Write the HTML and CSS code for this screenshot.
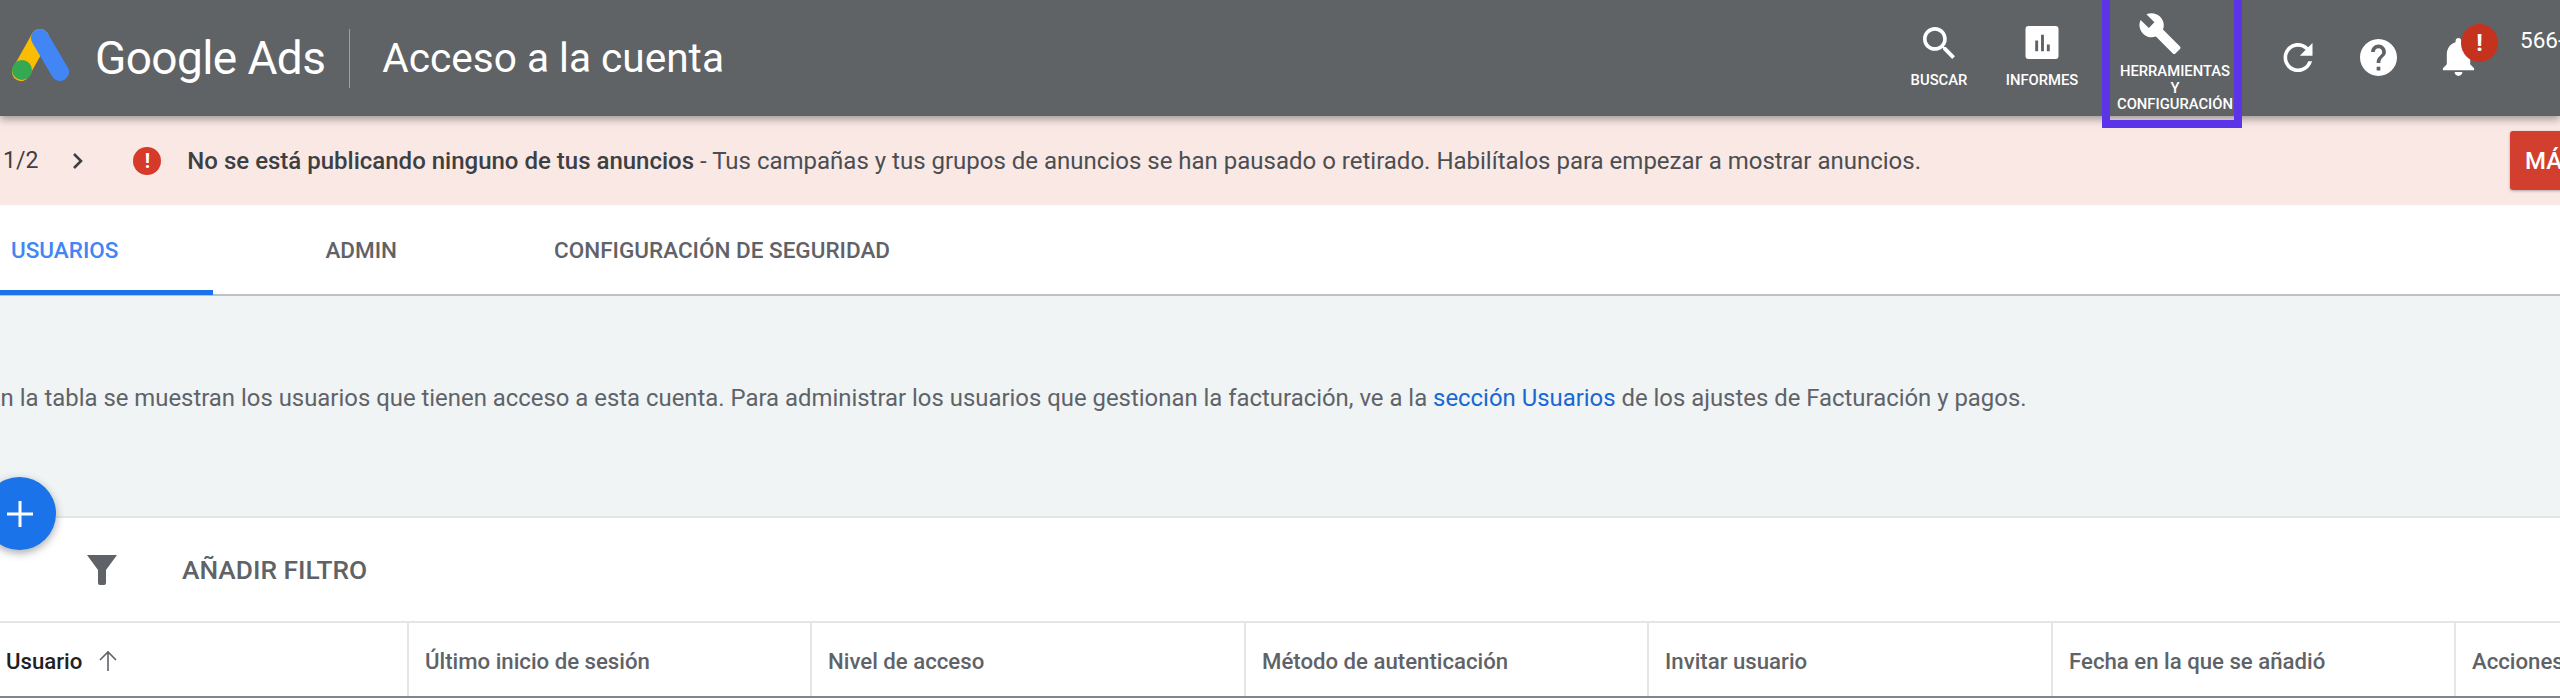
FILE: index.html
```html
<!DOCTYPE html>
<html lang="es">
<head>
<meta charset="utf-8">
<title>Acceso a la cuenta</title>
<link rel="stylesheet" href="styles.css">
</head>
<body>
<div class="page">
  <header class="topbar">
    <svg class="ads-logo" viewBox="0 0 58 52" width="58" height="52">
      <path d="M28 9 9 43" class="stripe-yellow"/>
      <path d="M28 9 48 43" class="stripe-blue"/>
      <circle cx="10" cy="41" r="10" class="dot-green"/>
    </svg>
    <span class="brand">Google Ads</span>
    <span class="divider"></span>
    <h1 class="page-title">Acceso a la cuenta</h1>
    <nav class="tools">
      <div class="tool tool-search">
        <svg class="icon icon-search" viewBox="3 3 17.5 17.5"><path d="M15.5 14h-.79l-.28-.27C15.41 12.59 16 11.11 16 9.5 16 5.91 13.09 3 9.5 3S3 5.91 3 9.5 5.91 16 9.5 16c1.61 0 3.09-.59 4.23-1.57l.27.28v.79l5 4.99L20.49 19l-4.99-5zm-6 0C7.01 14 5 11.99 5 9.5S7.01 5 9.5 5 14 7.01 14 9.5 11.99 14 9.5 14z"/></svg>
        <span class="tool-label">BUSCAR</span>
      </div>
      <div class="tool tool-reports">
        <svg class="icon icon-reports" viewBox="0 0 34 34"><path fill-rule="evenodd" d="M3 0h28a3 3 0 0 1 3 3v28a3 3 0 0 1-3 3H3a3 3 0 0 1-3-3V3a3 3 0 0 1 3-3zM10 15v11h3V15zM16 9v17h3V9zM22 19v7h3v-7z"/></svg>
        <span class="tool-label">INFORMES</span>
      </div>
      <div class="tool tool-config">
        <svg class="icon icon-wrench" viewBox="1 1 22 22"><path d="M22.7 19l-9.1-9.1c.9-2.3.4-5-1.5-6.9-2-2-5-2.4-7.4-1.3L9 6 6 9 1.6 4.7C.4 7.1.9 10.1 2.9 12.1c1.9 1.9 4.6 2.4 6.9 1.5l9.1 9.1c.4.4 1 .4 1.4 0l2.3-2.3c.5-.4.5-1.1.1-1.4z"/></svg>
        <span class="tool-label tool-label-stack">HERRAMIENTAS<br>Y<br>CONFIGURACIÓN</span>
        <span class="highlight"></span>
      </div>
      <svg class="icon icon-refresh" viewBox="4 4 16 16"><path d="M17.65 6.35C16.2 4.9 14.21 4 12 4c-4.42 0-7.99 3.58-7.99 8s3.57 8 7.99 8c3.73 0 6.84-2.55 7.73-6h-2.08c-.82 2.33-3.04 4-5.65 4-3.31 0-6-2.69-6-6s2.69-6 6-6c1.66 0 3.14.69 4.22 1.78L13 11h7V4l-2.35 2.35z"/></svg>
      <svg class="icon icon-help" viewBox="2 2 20 20"><path d="M12 2C6.48 2 2 6.48 2 12s4.48 10 10 10 10-4.48 10-10S17.52 2 12 2zm1 17h-2v-2h2v2zm2.07-7.75l-.9.92C13.45 12.9 13 13.5 13 15h-2v-.5c0-1.1.45-2.1 1.17-2.83l1.24-1.26c.37-.36.59-.86.59-1.41 0-1.1-.9-2-2-2s-2 .9-2 2H8c0-2.21 1.79-4 4-4s4 1.79 4 4c0 .88-.36 1.68-.93 2.25z"/></svg>
      <div class="bell">
        <svg class="icon icon-bell" viewBox="4 2.5 16 19.5"><path d="M12 22c1.1 0 2-.9 2-2h-4c0 1.1.89 2 2 2zm6-6v-5c0-3.07-1.64-5.64-4.5-6.32V4c0-.83-.67-1.5-1.5-1.5s-1.5.67-1.5 1.5v.68C7.63 5.36 6 7.92 6 11v5l-2 2v1h16v-1l-2-2z"/></svg>
        <span class="bell-badge">!</span>
      </div>
      <span class="account-id">566-</span>
    </nav>
  </header>

  <section class="alert">
    <span class="pager">1/2</span>
    <svg class="chevron" viewBox="0 0 14 20" width="14" height="20"><path d="M3 3l7 7-7 7"/></svg>
    <span class="alert-icon">!</span>
    <p class="alert-text"><strong>No se está publicando ninguno de tus anuncios</strong> - Tus campañas y tus grupos de anuncios se han pausado o retirado. Habilítalos para empezar a mostrar anuncios.</p>
    <button class="alert-button">MÁS</button>
  </section>

  <nav class="tabs">
    <span class="tab tab-active">USUARIOS</span>
    <span class="tab tab-admin">ADMIN</span>
    <span class="tab tab-security">CONFIGURACIÓN DE SEGURIDAD</span>
  </nav>

  <main class="content">
    <p class="intro">En la tabla se muestran los usuarios que tienen acceso a esta cuenta. Para administrar los usuarios que gestionan la facturación, ve a la <a class="intro-link">sección Usuarios</a> de los ajustes de Facturación y pagos.</p>
    <button class="fab"><svg viewBox="0 0 26 26" width="26" height="26"><path d="M13 0v26M0 13h26"/></svg></button>
  </main>

  <div class="filter-row">
    <svg class="filter-icon" viewBox="0 0 30 30" width="30" height="30"><path d="M0 0h30L19 15v13a2 2 0 0 1-2 2h-4a2 2 0 0 1-2-2V15z"/></svg>
    <span class="filter-label">AÑADIR FILTRO</span>
  </div>

  <div class="table-head">
    <div class="cell cell-user"><span>Usuario</span><svg class="sort-arrow" viewBox="0 0 22 22" width="22" height="22"><path d="M11 21V2M3 10l8-8 8 8"/></svg></div>
    <div class="cell">Último inicio de sesión</div>
    <div class="cell">Nivel de acceso</div>
    <div class="cell">Método de autenticación</div>
    <div class="cell">Invitar usuario</div>
    <div class="cell">Fecha en la que se añadió</div>
    <div class="cell">Acciones</div>
  </div>
</div>
</body>
</html>
```
FILE: styles.css
```css
* { box-sizing: border-box; }
html, body { margin: 0; padding: 0; }
body { font-family: Roboto, "Liberation Sans", sans-serif; background: #fff; color: #5f6368; }
.page { width: 2560px; height: 698px; overflow: hidden; position: relative; }

.topbar { height: 116px; background: #5f6366; color: #fff; display: flex; align-items: center; padding-left: 12px; position: relative; z-index: 2; box-shadow: 0 3px 8px rgba(60,64,67,.5); }
.ads-logo { flex: none; margin-top: -7px; }
.ads-logo path { fill: none; stroke-width: 18; stroke-linecap: round; }
.stripe-yellow { stroke: #fbbc04; }
.stripe-blue { stroke: #4285f4; }
.dot-green { fill: #34a853; }
.brand { font-size: 46px; letter-spacing: -.6px; margin-left: 25px; white-space: nowrap; }
.divider { width: 1px; height: 59px; background: #9aa0a6; margin-left: 24px; }
.page-title { font-size: 40.6px; font-weight: 400; margin: 0 0 0 32px; white-space: nowrap; }
.tools { margin-left: auto; display: flex; align-items: flex-start; height: 116px; flex: none; width: 650px; position: relative; }
.icon { fill: #fff; display: block; flex: none; }
.tool { display: flex; flex: none; flex-direction: column; align-items: center; position: relative; }
.tool-label { font-size: 14.8px; font-weight: 500; white-space: nowrap; text-align: center; }
.tool-search { width: 58px; margin-left: 0; padding-top: 27px; }
.icon-search { width: 32px; height: 32px; }
.tool-search .tool-label { margin-top: 12px; }
.tool-reports { width: 74px; margin-left: 37px; padding-top: 26px; }
.icon-reports { width: 34px; height: 33px; }
.tool-reports .tool-label { margin-top: 12px; }
.tool-config { width: 140px; margin-left: 23px; padding: 13px 0 0 6px; height: 116px; }
.icon-wrench { width: 42px; height: 41px; margin-right: 30px; }
.tool-label-stack { line-height: 16.5px; margin-top: 9px; }
.highlight { position: absolute; left: 0; right: 0; top: -8px; height: 136px; border: 8px solid #5b33e8; pointer-events: none; }
.icon-refresh { width: 30px; height: 29px; margin: 43px 0 0 41px; }
.icon-help { width: 37px; height: 37px; margin: 39px 0 0 47px; }
.bell { position: relative; margin: 38px 0 0 45px; width: 33px; height: 38px; flex: none; }
.icon-bell { width: 33px; height: 38px; }
.bell-badge { position: absolute; left: 19px; top: -14px; width: 37px; height: 38px; border-radius: 50%; background: #c5331f; color: #fff; font-size: 24px; font-weight: 700; display: flex; align-items: center; justify-content: center; }
.account-id { font-size: 22.5px; margin: 27px 0 0 45px; white-space: nowrap; }

.alert { height: 89px; background: #fae8e5; display: flex; align-items: center; padding-left: 3px; color: #4a4e52; position: relative; }
.pager { font-size: 23px; color: #3c4043; }
.chevron { margin-left: 33px; flex: none; }
.chevron path { fill: none; stroke: #3c4043; stroke-width: 2.6; }
.alert-icon { width: 28px; height: 28px; margin-left: 48px; border-radius: 50%; background: #d63a2a; color: #fff; font-size: 20px; font-weight: 700; display: flex; align-items: center; justify-content: center; flex: none; }
.alert-text { margin: 0 0 0 26px; font-size: 24px; white-space: nowrap; }
.alert-text strong { font-weight: 500; color: #3c4043; }
.alert-button { position: absolute; left: 2510px; top: 15px; width: 80px; height: 59px; padding: 0 0 0 15px; text-align: left; border: 0; border-radius: 3px; background: #d23f2e; color: #fff; font: 500 24px Roboto, sans-serif; box-shadow: 0 1px 3px rgba(60,64,67,.4); }

.tabs { height: 91px; background: #fff; border-bottom: 2px solid #bdc1c6; display: flex; align-items: center; padding-top: 1px; position: relative; }
.tab { font-size: 22.5px; font-weight: 500; color: #5f6368; white-space: nowrap; }
.tab-active { color: #4285f4; margin-left: 11px; }
.tab-active::after { content: ""; position: absolute; left: 0; bottom: -1px; width: 213px; height: 5px; background: #1a73e8; }
.tab-admin { margin-left: 207px; }
.tab-security { margin-left: 157px; }

.content { height: 220px; background: #f0f4f5; position: relative; padding-top: 88px; }
.intro { margin: 0 0 0 -13px; font-size: 23.9px; line-height: 28px; white-space: nowrap; }
.intro-link { color: #1967d2; }
.fab { position: absolute; left: -17px; top: 181px; width: 73px; height: 73px; border: 0; padding: 0; border-radius: 50%; background: #1a73e8; box-shadow: 0 3px 8px rgba(60,64,67,.45); display: flex; align-items: center; justify-content: center; z-index: 1; }
.fab path { stroke: #fff; stroke-width: 3; fill: none; }

.filter-row { height: 105px; background: #fff; border-top: 2px solid #e3e5e7; display: flex; align-items: center; padding-left: 87px; }
.filter-icon { fill: #5f6368; flex: none; }
.filter-label { font-size: 26.3px; font-weight: 500; margin-left: 65px; color: #5f6368; white-space: nowrap; }

.table-head { height: 78px; border-top: 2px solid #e3e5e7; border-bottom: 3px solid #80868b; display: grid; grid-template-columns: 409px 403px 434px 403px 404px 403px 200px; background: #fff; }
.cell { display: flex; align-items: center; padding-left: 16px; border-right: 2px solid #e3e5e7; font-size: 22.2px; font-weight: 500; color: #5f6368; white-space: nowrap; padding-top: 2px; }
.cell-user { padding-left: 6px; color: #202124; }
.sort-arrow { margin-left: 15px; flex: none; }
.sort-arrow path { fill: none; stroke: #5f6368; stroke-width: 1.6; }
```
